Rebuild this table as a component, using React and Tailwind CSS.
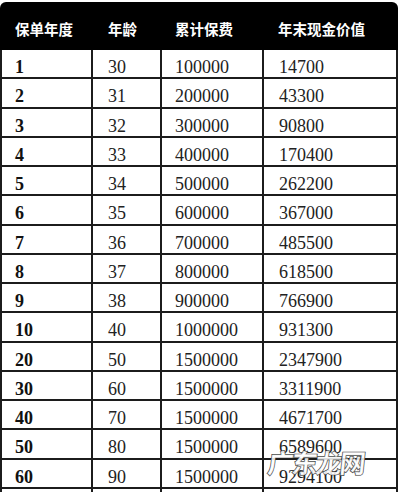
import React from "react";

const rows = [
  ["1", "30", "100000", "14700"],
  ["2", "31", "200000", "43300"],
  ["3", "32", "300000", "90800"],
  ["4", "33", "400000", "170400"],
  ["5", "34", "500000", "262200"],
  ["6", "35", "600000", "367000"],
  ["7", "36", "700000", "485500"],
  ["8", "37", "800000", "618500"],
  ["9", "38", "900000", "766900"],
  ["10", "40", "1000000", "931300"],
  ["20", "50", "1500000", "2347900"],
  ["30", "60", "1500000", "3311900"],
  ["40", "70", "1500000", "4671700"],
  ["50", "80", "1500000", "6589600"],
  ["60", "90", "1500000", "9294100"],
  ["", "", "", ""],
];

const serif = { fontFamily: '"Liberation Serif", "DejaVu Serif", serif' };

export default function App() {
  return (
    <div className="relative w-[401px] h-[492px] overflow-hidden bg-white pt-[2px]">
      <div className="w-[398px]">
        <div
          className="grid grid-cols-[91px_69px_102px_136px] h-[48px] bg-black rounded-t-[6px] text-white font-bold text-[14.5px] items-center pt-[6px]"
          style={{ fontFamily: '"Noto Sans CJK SC", "Noto Sans", sans-serif' }}
        >
          <div className="pl-[15px]">保单年度</div>
          <div className="pl-[17px]">年龄</div>
          <div className="pl-[15px]">累计保费</div>
          <div className="pl-[16px]">年末现金价值</div>
        </div>
        {rows.map((r, i) => (
          <div
            key={i}
            className="grid grid-cols-[91px_69px_102px_136px] h-[29.27px] border-b-2 border-[#1c1c1c] text-[18px] text-[#222] leading-none"
            style={serif}
          >
            <div className="border-l-2 border-[#1c1c1c] pl-[13px] pt-[8px] font-bold text-[#111]">{r[0]}</div>
            <div className="border-l-2 border-[#1c1c1c] pl-[15px] pt-[8px]">{r[1]}</div>
            <div className="border-l-2 border-[#1c1c1c] pl-[13px] pt-[8px]">{r[2]}</div>
            <div className="border-l-2 border-r-2 border-[#1c1c1c] pl-[15px] pt-[8px]">{r[3]}</div>
          </div>
        ))}
      </div>
      <div
        className="absolute left-[268px] top-[449px] text-[26px] font-bold text-white/85 leading-none tracking-[-2px] [-webkit-text-stroke:1.2px_#333] [paint-order:stroke_fill] -skew-x-6"
        style={{ fontFamily: '"Noto Sans CJK SC", sans-serif' }}
      >
        广东龙网
      </div>
    </div>
  );
}
